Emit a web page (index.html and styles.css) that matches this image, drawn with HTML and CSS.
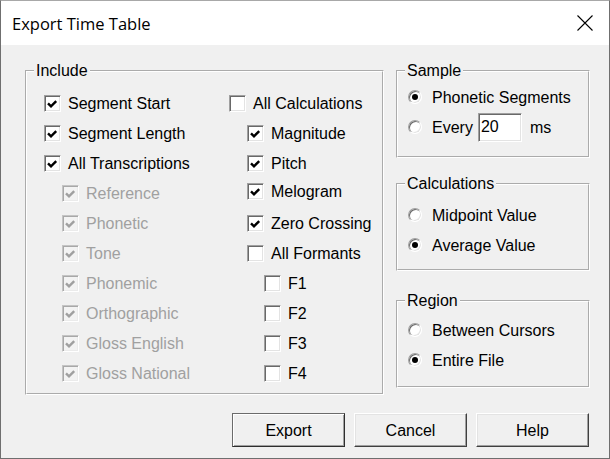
FILE: index.html
```html
<!DOCTYPE html>
<html lang="en">
<head>
<meta charset="utf-8">
<title>Export Time Table</title>
<link rel="stylesheet" href="styles.css">
</head>
<body>
<div class="window">
  <div class="titlebar">
    <span class="title">Export Time Table</span>
    <svg class="close" width="16" height="16" viewBox="0 0 16 16"><path d="M0.5 0.5L15.5 15.5M15.5 0.5L0.5 15.5" stroke="#000" stroke-width="1.1" fill="none"/></svg>
  </div>
  <div class="client">
    <div class="main">
      <fieldset class="group include">
        <legend>Include</legend>
        <div class="include-body">
          <div class="col">
            <div class="row"><span class="cb"><svg viewBox="0 0 15 15"><path d="M3 7.3L6 10.3L11.2 5.1"/></svg></span><span class="t">Segment Start</span></div>
            <div class="row"><span class="cb"><svg viewBox="0 0 15 15"><path d="M3 7.3L6 10.3L11.2 5.1"/></svg></span><span class="t">Segment Length</span></div>
            <div class="row"><span class="cb"><svg viewBox="0 0 15 15"><path d="M3 7.3L6 10.3L11.2 5.1"/></svg></span><span class="t">All Transcriptions</span></div>
            <div class="row i1 off"><span class="cb"><svg viewBox="0 0 15 15"><path d="M3 7.3L6 10.3L11.2 5.1"/></svg></span><span class="t">Reference</span></div>
            <div class="row i1 off"><span class="cb"><svg viewBox="0 0 15 15"><path d="M3 7.3L6 10.3L11.2 5.1"/></svg></span><span class="t">Phonetic</span></div>
            <div class="row i1 off"><span class="cb"><svg viewBox="0 0 15 15"><path d="M3 7.3L6 10.3L11.2 5.1"/></svg></span><span class="t">Tone</span></div>
            <div class="row i1 off"><span class="cb"><svg viewBox="0 0 15 15"><path d="M3 7.3L6 10.3L11.2 5.1"/></svg></span><span class="t">Phonemic</span></div>
            <div class="row i1 off"><span class="cb"><svg viewBox="0 0 15 15"><path d="M3 7.3L6 10.3L11.2 5.1"/></svg></span><span class="t">Orthographic</span></div>
            <div class="row i1 off"><span class="cb"><svg viewBox="0 0 15 15"><path d="M3 7.3L6 10.3L11.2 5.1"/></svg></span><span class="t">Gloss English</span></div>
            <div class="row i1 off"><span class="cb"><svg viewBox="0 0 15 15"><path d="M3 7.3L6 10.3L11.2 5.1"/></svg></span><span class="t">Gloss National</span></div>
          </div>
          <div class="col">
            <div class="row"><span class="cb"></span><span class="t">All Calculations</span></div>
            <div class="row i1"><span class="cb"><svg viewBox="0 0 15 15"><path d="M3 7.3L6 10.3L11.2 5.1"/></svg></span><span class="t">Magnitude</span></div>
            <div class="row i1"><span class="cb"><svg viewBox="0 0 15 15"><path d="M3 7.3L6 10.3L11.2 5.1"/></svg></span><span class="t">Pitch</span></div>
            <div class="row i1 up"><span class="cb"><svg viewBox="0 0 15 15"><path d="M3 7.3L6 10.3L11.2 5.1"/></svg></span><span class="t">Melogram</span></div>
            <div class="row i1"><span class="cb"><svg viewBox="0 0 15 15"><path d="M3 7.3L6 10.3L11.2 5.1"/></svg></span><span class="t">Zero Crossing</span></div>
            <div class="row i1"><span class="cb"></span><span class="t">All Formants</span></div>
            <div class="row i2"><span class="cb"></span><span class="t">F1</span></div>
            <div class="row i2"><span class="cb"></span><span class="t">F2</span></div>
            <div class="row i2"><span class="cb"></span><span class="t">F3</span></div>
            <div class="row i2"><span class="cb"></span><span class="t">F4</span></div>
          </div>
        </div>
      </fieldset>
      <div class="side">
        <fieldset class="group sample">
          <legend>Sample</legend>
          <div class="body">
            <div class="row"><span class="rb on"></span><span class="t">Phonetic Segments</span></div>
            <div class="row"><span class="rb"></span><span class="t">Every</span><input class="num" type="text" value="20"><span class="t unit">ms</span></div>
          </div>
        </fieldset>
        <fieldset class="group calc">
          <legend>Calculations</legend>
          <div class="body">
            <div class="row"><span class="rb"></span><span class="t">Midpoint Value</span></div>
            <div class="row"><span class="rb on"></span><span class="t">Average Value</span></div>
          </div>
        </fieldset>
        <fieldset class="group region">
          <legend>Region</legend>
          <div class="body">
            <div class="row"><span class="rb"></span><span class="t">Between Cursors</span></div>
            <div class="row"><span class="rb on"></span><span class="t">Entire File</span></div>
          </div>
        </fieldset>
      </div>
    </div>
    <div class="buttons">
      <button class="btn default" type="button">Export</button>
      <button class="btn" type="button">Cancel</button>
      <button class="btn" type="button">Help</button>
    </div>
  </div>
</div>
</body>
</html>
```
FILE: styles.css
```css
* { box-sizing: border-box; }
html, body { margin: 0; padding: 0; }
body {
  width: 610px;
  height: 459px;
  overflow: hidden;
  background: #f0f0f0;
  font-family: "Liberation Sans", Arial, sans-serif;
  font-size: 16px;
  color: #000;
}
.window {
  width: 610px;
  height: 459px;
  display: flex;
  flex-direction: column;
  border: 1px solid #6f6f6f;
  border-top-color: #a8a8a8;
  background: #f0f0f0;
}
.titlebar {
  flex: none;
  height: 44px;
  background: #fff;
  display: flex;
  align-items: center;
  justify-content: space-between;
  padding: 0 16px 0 11px;
}
.title {
  font-family: "Open Sans", "Noto Sans", sans-serif;
  font-size: 16.5px;
  color: #000;
}
.close { display: block; margin-top: -1px; }
.client {
  flex: 1;
  display: flex;
  flex-direction: column;
  padding: 17px 19px 0 24px;
}
.main {
  display: flex;
  align-items: flex-start;
  gap: 12px;
}
.group {
  margin: 0;
  padding: 0;
  min-width: 0;
  border: 2px groove #fff;
}
.group legend {
  margin-left: 7px;
  padding: 0 2px;
  height: 18px;
  line-height: 18px;
  font-size: 16px;
}
.include { width: 359px; }
.include-body {
  display: grid;
  grid-template-columns: 185px 1fr;
  padding: 8px 0 5px 17px;
}
.row {
  display: flex;
  align-items: center;
  height: 30px;
  white-space: nowrap;
}
.t { padding-top: 2px; }
.row.up { margin-top: -2px; margin-bottom: 2px; }
.i1 { padding-left: 18px; }
.i2 { padding-left: 35px; }
.cb {
  flex: none;
  width: 17px;
  height: 17px;
  margin-right: 7px;
  background: #fff;
  border: 1px solid;
  border-color: #a0a0a0 #fff #fff #a0a0a0;
  box-shadow: inset 1px 1px #696969, inset -1px -1px #e3e3e3;
}
.cb svg {
  display: block;
  width: 15px;
  height: 15px;
}
.cb svg path {
  fill: none;
  stroke: #000;
  stroke-width: 2.4;
}
.off { color: #a0a0a0; }
.off .cb {
  background: #f3f3f3;
  border-color: #c4c4c4 #fff #fff #c4c4c4;
  box-shadow: inset 1px 1px #a8a8a8, inset -1px -1px #ebebeb;
}
.off .cb svg path { stroke: #a0a0a0; }
.side {
  width: 194px;
  display: flex;
  flex-direction: column;
}
.side .body { padding-left: 10px; }
.sample .body { padding-top: 2px; padding-bottom: 14px; }
.calc { margin-top: 17px; }
.calc .body { padding-top: 7px; padding-bottom: 9px; }
.region { margin-top: 21px; }
.region .body { padding-top: 5px; padding-bottom: 11px; }
.rb {
  flex: none;
  position: relative;
  width: 14px;
  height: 14px;
  margin-right: 10px;
  border-radius: 50%;
  background: #fff;
  border: 1px solid;
  border-color: #a0a0a0 #fff #fff #a0a0a0;
  box-shadow: inset 1px 1px #696969, inset -1px -1px #e3e3e3;
}
.rb.on::after {
  content: "";
  position: absolute;
  left: 3px;
  top: 3px;
  width: 6px;
  height: 6px;
  border-radius: 50%;
  background: #000;
}
.num {
  width: 44px;
  height: 29px;
  margin: 0 0 0 5px;
  padding: 0 0 0 2px;
  font-family: "Liberation Sans", Arial, sans-serif;
  font-size: 16px;
  color: #000;
  background: #fff;
  border: 1px solid;
  border-color: #a0a0a0 #fff #fff #a0a0a0;
  box-shadow: inset 1px 1px #696969, inset -1px -1px #e3e3e3;
  outline: none;
}
.unit { margin-left: 8px; }
.buttons {
  display: flex;
  justify-content: flex-end;
  gap: 9px;
  margin-top: 18px;
  padding-right: 1px;
}
.btn {
  appearance: none;
  width: 113px;
  height: 34px;
  margin: 0;
  padding: 1px 0 0;
  background: #f0f0f0;
  font-family: "Liberation Sans", Arial, sans-serif;
  font-size: 16px;
  color: #000;
  border: 1px solid;
  border-color: #fff #404040 #404040 #fff;
  box-shadow: inset -1px -1px #a0a0a0, inset 1px 1px #e3e3e3;
}
.btn.default {
  border-color: #6b6b6b #2e2e2e #2e2e2e #6b6b6b;
  box-shadow: inset 1px 1px #fff, inset -1px -1px #a0a0a0;
}
```
